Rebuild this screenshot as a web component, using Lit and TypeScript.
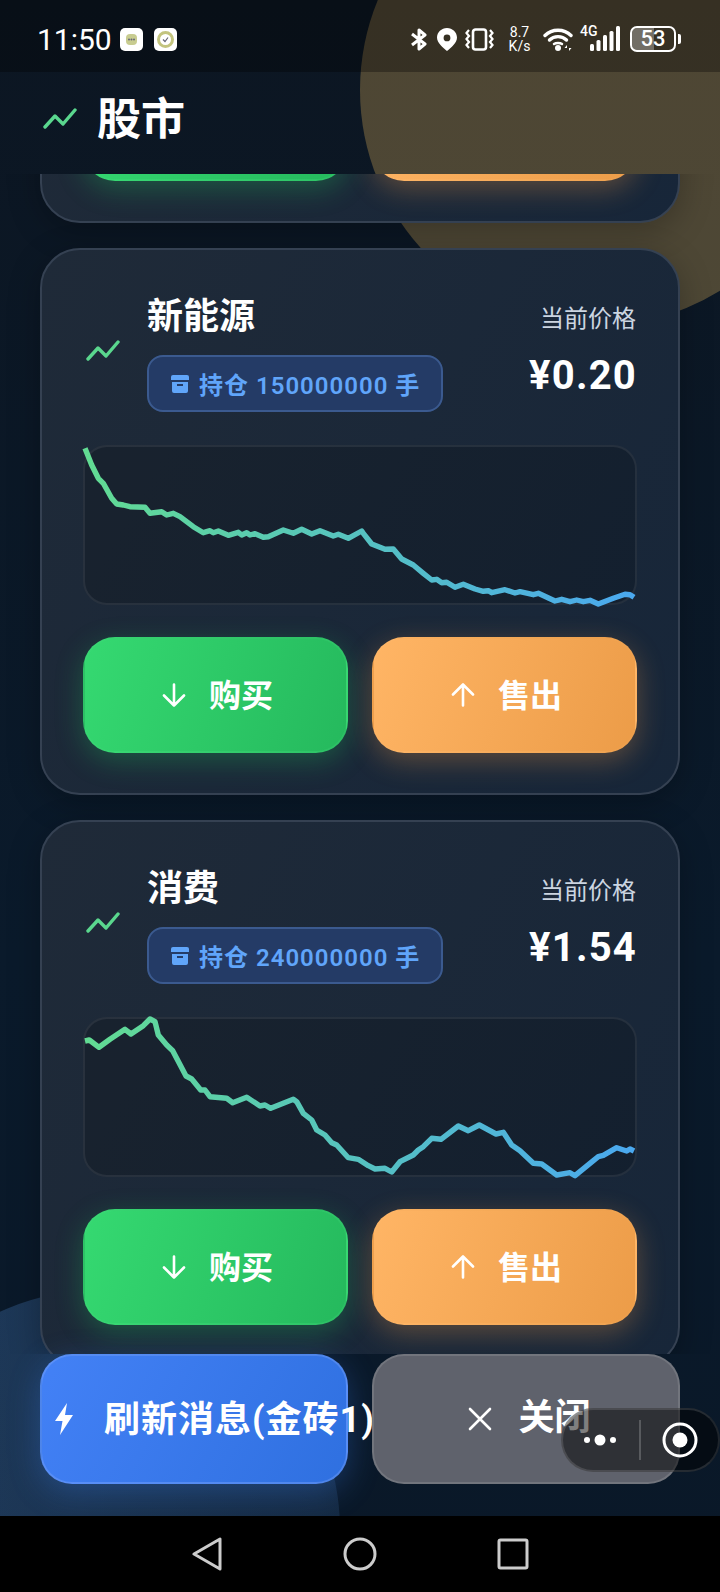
import { LitElement, html, css, svg } from "lit";
import { customElement, property } from "lit/decorators.js";

const trendIcon = html`<svg class="trend" width="34" height="22" viewBox="0 0 34 22" fill="none">
  <path d="M2 19 L12 8 L20 16 L32 2" stroke="#5ad78e" stroke-width="3.4" stroke-linecap="round" stroke-linejoin="round" />
</svg>`;

const LINE_A = "3,2.3 9.7,19 16.3,32.3 21.3,37.3 29.7,52.3 34.7,58 41.3,59 48,60.7 63,61.3 68,67.3 79.7,65.7 84.7,69 91.3,67.3 98,70.7 111.3,80.7 121.3,86.7 128,84.7 131.3,86.7 136.3,85 146.3,89.3 156.3,86.3 159.7,89 164.7,86.7 168,89 173,87.7 181.3,91.3 186.3,90.7 201.3,84 211.3,87.3 219.7,83.3 229.7,88 238,84.7 251.3,90 256.3,88.3 266.3,92.3 279.7,85 281.3,87.3 289.7,98 303,103.3 311.3,103 319.7,113 331.3,119 341.3,127.3 349.7,134 354.7,133.3 359.7,136.7 364.7,136.3 373,141.3 381.3,138.3 393,143 401.3,145.3 406.3,144.7 409.7,146.7 423,143.7 433,147 438,145.7 451.3,148.7 456.3,147.3 473,155 479.7,153.3 488,155.7 494.7,154 501.3,155.7 508,154.3 516.3,158 531.3,152.3 543,148.3 548,148.7 552,151.3";
const LINE_B = "3,23 7.3,22 17,29.3 28,21.3 43,11.3 49,16 61.3,7.7 68,1 73,3.7 76.3,17 84.7,27 90.7,32.7 104,58 109.7,61 118.7,72 123,72 128,78.7 144.7,80.3 150.7,84.7 164.7,79.3 178,88 183,87 188.7,90.3 211.3,81.3 214.7,83.7 221.3,95.3 229.7,102 234.7,112 243,117 249.7,124.7 254.7,127 266.3,139.7 276.3,141.3 286.3,147.7 293,151 303,150.3 309.7,154 318,143.7 331.3,137 336.3,132 341.3,128.7 349.7,120.3 359,121.3 376.3,108 386.3,112.7 397.3,107 414,116 421.3,114.3 429.7,127 438,132.7 451.3,145.3 459.7,146 474.7,157 488,154.7 493,157.7 508,145.3 516.3,138.7 521.3,137.3 534.7,129.7 544.7,133 548,131 552,133";

const stocks = [
  { name: "新能源", hold: "150000000", price: "¥0.20", line: LINE_A },
  { name: "消费", hold: "240000000", price: "¥1.54", line: LINE_B },
];

@customElement("stock-card")
class StockCard extends LitElement {
  @property() name = "";
  @property() hold = "";
  @property() price = "";
  @property() line = "";
  @property() gid = "g";
  // only the bottom of the card is still in view after scrolling
  @property({ type: Boolean }) tail = false;

  static styles = css`
    :host {
      display: block;
    }
    .card {
      box-sizing: border-box;
      height: 547px;
      padding: 40px 41px;
      border: 2px solid #354152;
      border-radius: 40px;
      background: linear-gradient(120deg, #1f2a38, #172639);
      box-shadow: 0 8px 32px rgba(0, 0, 0, 0.25);
    }
    .card.tail {
      height: 139px;
      padding-top: 0;
    }
    .tail .btns {
      margin-top: 0;
    }
    .tail .btn {
      height: 95px;
    }
    .head {
      display: flex;
      align-items: center;
      height: 122px;
    }
    .trend-box {
      box-sizing: border-box;
      width: 64px;
      padding-left: 3px;
      display: flex;
      flex: none;
    }
    .info {
      flex: 1;
      display: flex;
      flex-direction: column;
      gap: 11px;
    }
    .name {
      font-size: 36px;
      font-weight: 700;
      line-height: 54px;
      color: #fff;
    }
    .badge {
      box-sizing: border-box;
      align-self: flex-start;
      height: 57px;
      width: 296px;
      display: flex;
      align-items: center;
      gap: 10px;
      padding-left: 22px;
      border: 2px solid #3b5a8f;
      border-radius: 16px;
      background: #243b66;
      color: #60a5fa;
      font-size: 24px;
      font-weight: 600;
      letter-spacing: 1px;
      white-space: nowrap;
    }
    .price-col {
      display: flex;
      flex-direction: column;
      align-items: flex-end;
      align-self: flex-start;
      padding-top: 12px;
    }
    .label {
      font-size: 24px;
      line-height: 34px;
      color: #cbd5e1;
      margin-right: 1px;
    }
    .price {
      margin-top: 17px;
      font-size: 40px;
      line-height: 46px;
      font-weight: 700;
      letter-spacing: 1.2px;
      color: #fff;
    }
    .chart {
      box-sizing: border-box;
      height: 160px;
      margin-top: 33px;
      border: 2px solid rgba(255, 255, 255, 0.07);
      border-radius: 24px;
      background: rgba(0, 0, 0, 0.17);
    }
    .chart svg {
      display: block;
      margin: -1px 0 0 -3px;
      overflow: visible;
    }
    .btns {
      display: grid;
      grid-template-columns: 1fr 1fr;
      gap: 24px;
      margin-top: 32px;
    }
    .btn {
      box-sizing: border-box;
      height: 116px;
      display: flex;
      align-items: center;
      justify-content: center;
      gap: 23px;
      padding-left: 4px;
      border-radius: 32px;
      color: #fff;
      font-size: 32px;
      font-weight: 700;
    }
    .btn span {
      margin-top: -4px;
    }
    .buy {
      background: linear-gradient(110deg, #35d971, #25b95d);
      border: 2px solid rgba(74, 222, 128, 0.2);
      box-shadow: 0 8px 28px rgba(34, 197, 94, 0.3);
    }
    .sell {
      background: linear-gradient(110deg, #ffb565, #ec9c48);
      border: 2px solid rgba(255, 200, 140, 0.06);
      box-shadow: 0 8px 28px rgba(251, 160, 70, 0.3);
    }
  `;

  render() {
    if (this.tail) {
      return html`<div class="card tail">
        <div class="btns">
          <div class="btn buy"></div>
          <div class="btn sell"></div>
        </div>
      </div>`;
    }
    return html`<div class="card">
      <div class="head">
        <div class="trend-box">${trendIcon}</div>
        <div class="info">
          <div class="name">${this.name}</div>
          <div class="badge">
            <svg width="18" height="18" viewBox="0 0 18 18" fill="#60a5fa">
              <path d="M2 0 H16 A2 2 0 0 1 18 2 V5 H0 V2 A2 2 0 0 1 2 0 Z" />
              <path fill-rule="evenodd" d="M1 7 H17 V16 A2 2 0 0 1 15 18 H3 A2 2 0 0 1 1 16 Z M6 9 V11 H12 V9 Z" />
            </svg>
            <span>持仓 ${this.hold} 手</span>
          </div>
        </div>
        <div class="price-col">
          <div class="label">当前价格</div>
          <div class="price">${this.price}</div>
        </div>
      </div>
      <div class="chart">
        <svg width="556" height="158" viewBox="0 0 556 158" fill="none">
          <defs>
            <linearGradient id=${this.gid} gradientUnits="userSpaceOnUse" x1="0" y1="0" x2="556" y2="0">
              <stop offset="0" stop-color="#62dc92" />
              <stop offset="1" stop-color="#4aa8f0" />
            </linearGradient>
          </defs>
          ${svg`<polyline points=${this.line} stroke="url(#${this.gid})" stroke-width="5.4" stroke-linejoin="round" />`}
        </svg>
      </div>
      <div class="btns">
        <div class="btn buy">
          <svg width="24" height="24" viewBox="0 0 24 24" fill="none" stroke="#fff" stroke-width="2.6" stroke-linecap="round" stroke-linejoin="round">
            <path d="M12 1.5 V22.5 M2 12.5 L12 22.5 L22 12.5" />
          </svg>
          <span>购买</span>
        </div>
        <div class="btn sell">
          <svg width="24" height="24" viewBox="0 0 24 24" fill="none" stroke="#fff" stroke-width="2.6" stroke-linecap="round" stroke-linejoin="round">
            <path d="M12 22.5 V1.5 M2 11.5 L12 1.5 L22 11.5" />
          </svg>
          <span>售出</span>
        </div>
      </div>
    </div>`;
  }
}

@customElement("app-root")
class AppRoot extends LitElement {
  static styles = css`
    :host {
      display: block;
      position: relative;
      width: 720px;
      height: 1592px;
      overflow: hidden;
      background: linear-gradient(180deg, #0c1622, #0a1a2b 60%, #0a1828);
      font-family: Roboto, "Noto Sans CJK SC", sans-serif;
    }
    .page {
      position: relative;
      height: 100%;
      display: flex;
      flex-direction: column;
    }
    .blob {
      position: absolute;
      border-radius: 50%;
    }
    .gold {
      left: 360px;
      top: -146px;
      width: 472px;
      height: 472px;
      background: rgba(255, 200, 100, 0.276);
    }
    .blue {
      left: -140px;
      top: 1290px;
      width: 480px;
      height: 480px;
      background: linear-gradient(90deg, rgba(96, 165, 250, 0.26), rgba(96, 165, 250, 0.12));
    }
    .status {
      flex: none;
      height: 72px;
      box-sizing: border-box;
      display: flex;
      align-items: center;
      padding: 6px 39px 0 37px;
      background: rgba(0, 0, 0, 0.3);
      color: #fff;
    }
    .time {
      font-size: 30px;
      width: 83px;
    }
    .mini {
      width: 23px;
      height: 23px;
      margin-right: 11px;
      display: block;
    }
    .status-right {
      margin-left: auto;
      display: flex;
      align-items: center;
      gap: 10px;
    }
    .vibrate {
      margin-left: -2px;
    }
    .speed {
      width: 25px;
      margin: 0 1px 0 3px;
      font-size: 14px;
      line-height: 14px;
      text-align: center;
    }
    .signal {
      position: relative;
      width: 35px;
      height: 26px;
      margin-left: 2px;
    }
    .signal span {
      position: absolute;
      left: -5px;
      top: -3px;
      font-size: 14px;
      font-weight: 500;
    }
    .signal svg {
      position: absolute;
      left: 5px;
      top: 0;
    }
    .battery {
      position: relative;
      box-sizing: border-box;
      width: 46px;
      height: 26px;
      border: 2px solid #fff;
      border-radius: 7px;
      overflow: hidden;
      display: flex;
      align-items: center;
      justify-content: center;
      font-size: 22px;
      font-weight: 500;
      line-height: 1;
    }
    .battery::before {
      content: "";
      position: absolute;
      left: 0;
      top: 0;
      bottom: 0;
      width: 53%;
      background: rgba(255, 255, 255, 0.3);
    }
    .battery span {
      position: relative;
    }
    .nub {
      width: 3px;
      height: 10px;
      margin-left: -8px;
      border-radius: 0 2px 2px 0;
      background: #fff;
    }
    .header {
      flex: none;
      height: 102px;
      box-sizing: border-box;
      display: flex;
      align-items: center;
      gap: 20px;
      padding: 0 0 8px 43px;
      color: #fff;
      font-size: 44px;
      font-weight: 700;
    }
    .header span {
      margin-top: -6px;
    }
    .list {
      flex: 1;
      min-height: 0;
      overflow: hidden;
    }
    .list-inner {
      display: flex;
      flex-direction: column;
      gap: 25px;
      margin: -90px 40px 0;
    }
    .footer {
      flex: none;
      display: grid;
      grid-template-columns: minmax(0, 1fr) minmax(0, 1fr);
      gap: 24px;
      padding: 0 40px 32px;
    }
    .action {
      box-sizing: border-box;
      height: 130px;
      display: flex;
      align-items: center;
      border-radius: 32px;
      color: #fff;
      font-size: 36px;
      font-weight: 700;
      white-space: nowrap;
    }
    .action svg {
      flex: none;
    }
    .refresh span {
      margin-top: -7px;
    }
    .close span {
      margin-top: -10px;
    }
    .refresh {
      gap: 30px;
      padding-left: 12px;
      letter-spacing: 1px;
      background: linear-gradient(120deg, #4381f6, #2f70e0);
      border: 2px solid rgba(147, 180, 255, 0.3);
      box-shadow: 0 8px 32px rgba(59, 130, 246, 0.3);
    }
    .close {
      justify-content: center;
      gap: 26px;
      padding-left: 7px;
      background: #5f626c;
      border: 2px solid rgba(255, 255, 255, 0.12);
    }
    .nav {
      flex: none;
      height: 76px;
      background: #000;
      display: flex;
      align-items: center;
      justify-content: center;
      gap: 120px;
    }
    .capsule {
      position: absolute;
      left: 561px;
      top: 1408px;
      box-sizing: border-box;
      width: 159px;
      height: 64px;
      display: flex;
      align-items: center;
      border: 2px solid rgba(255, 255, 255, 0.13);
      border-right-color: rgba(255, 255, 255, 0.1);
      border-radius: 32px;
      background: rgba(0, 0, 0, 0.5);
    }
    .capsule .left {
      width: 76px;
      padding-right: 2px;
      box-sizing: border-box;
      display: flex;
      justify-content: center;
    }
    .capsule .div {
      width: 2px;
      height: 40px;
      background: rgba(255, 255, 255, 0.2);
    }
    .capsule .right {
      flex: 1;
      display: flex;
      justify-content: center;
    }
  `;

  render() {
    return html`
      <div class="blob gold"></div>
      <div class="blob blue"></div>
      <div class="page">
        <div class="status">
          <div class="time">11:50</div>
          <svg class="mini" viewBox="0 0 23 23">
            <rect width="23" height="23" rx="5" fill="#fff" />
            <rect x="6" y="6" width="11" height="11" rx="4" fill="#c8cc90" />
            <circle cx="9" cy="11.5" r="1" fill="#667" />
            <circle cx="11.5" cy="11.5" r="1" fill="#667" />
            <circle cx="14" cy="11.5" r="1" fill="#667" />
          </svg>
          <svg class="mini" viewBox="0 0 23 23">
            <rect width="23" height="23" rx="5" fill="#fff" />
            <circle cx="11.5" cy="11.5" r="7" fill="none" stroke="#c3c47e" stroke-width="3" />
            <path d="M9 11.5 L11 13.5 L14 9.5" fill="none" stroke="#667" stroke-width="1.2" />
          </svg>
          <div class="status-right">
            <svg width="16" height="23" viewBox="0 0 16 23" fill="none" stroke="#fff" stroke-width="3" stroke-linejoin="round">
              <path d="M1 6 L14 16 L8 21 V2 L14 7 L1 17" />
            </svg>
            <svg width="20" height="23" viewBox="0 0 20 23">
              <path fill="#fff" fill-rule="evenodd" d="M10 0 C4.5 0 0 4.3 0 9.6 C0 15 6 20 10 23 C14 20 20 15 20 9.6 C20 4.3 15.5 0 10 0 Z M10 6.5 A3.4 3.4 0 1 1 10 13.3 A3.4 3.4 0 1 1 10 6.5 Z" />
            </svg>
            <svg class="vibrate" width="29" height="23" viewBox="0 0 29 23" fill="none" stroke="#fff">
              <rect x="8" y="1.5" width="13" height="20" rx="2.5" stroke-width="2.6" />
              <path d="M4 2 L1.5 5 L4 8 L1.5 11 L4 14 L1.5 17 L4 20 M25 2 L27.5 5 L25 8 L27.5 11 L25 14 L27.5 17 L25 20" stroke-width="2.2" />
            </svg>
            <div class="speed">8.7<br />K/s</div>
            <svg width="30" height="23" viewBox="0 0 30 23" fill="none" stroke="#fff" stroke-width="3.4" stroke-linecap="round">
              <path d="M2 7.5 C9 0.5 21 0.5 28 7.5" />
              <path d="M6.5 12 C11 7.5 19 7.5 23.5 12" />
              <path d="M11 16 C13 14.5 17 14.5 19 16" stroke-width="2.5" />
              <circle cx="15" cy="20" r="3" fill="#fff" stroke="none" />
              <path d="M24 17 L21.5 20 H24 Z M26 23 L28.5 20 H26 Z" fill="#fff" stroke="none" />
            </svg>
            <div class="signal">
              <span>4G</span>
              <svg width="30" height="26" viewBox="0 0 30 26" fill="#fff">
                <rect x="0" y="18" width="4" height="7" rx="1.5" />
                <rect x="6.5" y="14" width="4" height="11" rx="1.5" />
                <rect x="13" y="9" width="4" height="16" rx="1.5" />
                <rect x="19.5" y="5" width="4" height="20" rx="1.5" />
                <rect x="26" y="0" width="4" height="25" rx="1.5" />
              </svg>
            </div>
            <div class="battery"><span>53</span></div>
            <div class="nub"></div>
          </div>
        </div>
        <div class="header">
          ${trendIcon}
          <span>股市</span>
        </div>
        <div class="list">
          <div class="list-inner">
            <stock-card tail></stock-card>
            ${stocks.map(
              (s, i) => html`<stock-card
                .name=${s.name}
                .hold=${s.hold}
                .price=${s.price}
                .line=${s.line}
                .gid=${"line" + i}
              ></stock-card>`
            )}
          </div>
        </div>
        <div class="footer">
          <div class="action refresh">
            <svg width="20" height="32" viewBox="0 0 20 32" fill="#fff">
              <path d="M13 0 L1 18 H8.5 L6 32 L19 12 H11 Z" />
            </svg>
            <span>刷新消息(金砖1)</span>
          </div>
          <div class="action close">
            <svg width="24" height="24" viewBox="0 0 24 24" fill="none" stroke="#fff" stroke-width="2.6" stroke-linecap="round">
              <path d="M2 2 L22 22 M22 2 L2 22" />
            </svg>
            <span>关闭</span>
          </div>
        </div>
        <div class="nav">
          <svg width="32" height="34" viewBox="0 0 32 34" fill="none" stroke="#ccc" stroke-width="3" stroke-linejoin="round">
            <path d="M29 2 V32 L3 17 Z" />
          </svg>
          <svg width="34" height="34" viewBox="0 0 34 34" fill="none" stroke="#ccc" stroke-width="3">
            <circle cx="17" cy="17" r="15" />
          </svg>
          <svg width="32" height="32" viewBox="0 0 32 32" fill="none" stroke="#ccc" stroke-width="3" stroke-linejoin="round">
            <rect x="2" y="2" width="28" height="28" rx="1.5" />
          </svg>
        </div>
      </div>
      <div class="capsule">
        <div class="left">
          <svg width="34" height="14" viewBox="0 0 34 14" fill="#fff">
            <circle cx="4" cy="7" r="3" />
            <circle cx="17" cy="7" r="5.5" />
            <circle cx="30" cy="7" r="3" />
          </svg>
        </div>
        <div class="div"></div>
        <div class="right">
          <svg width="36" height="36" viewBox="0 0 36 36" fill="none">
            <circle cx="18" cy="18" r="16" stroke="#fff" stroke-width="3" />
            <circle cx="18" cy="18" r="7.5" fill="#fff" />
          </svg>
        </div>
      </div>
    `;
  }
}
